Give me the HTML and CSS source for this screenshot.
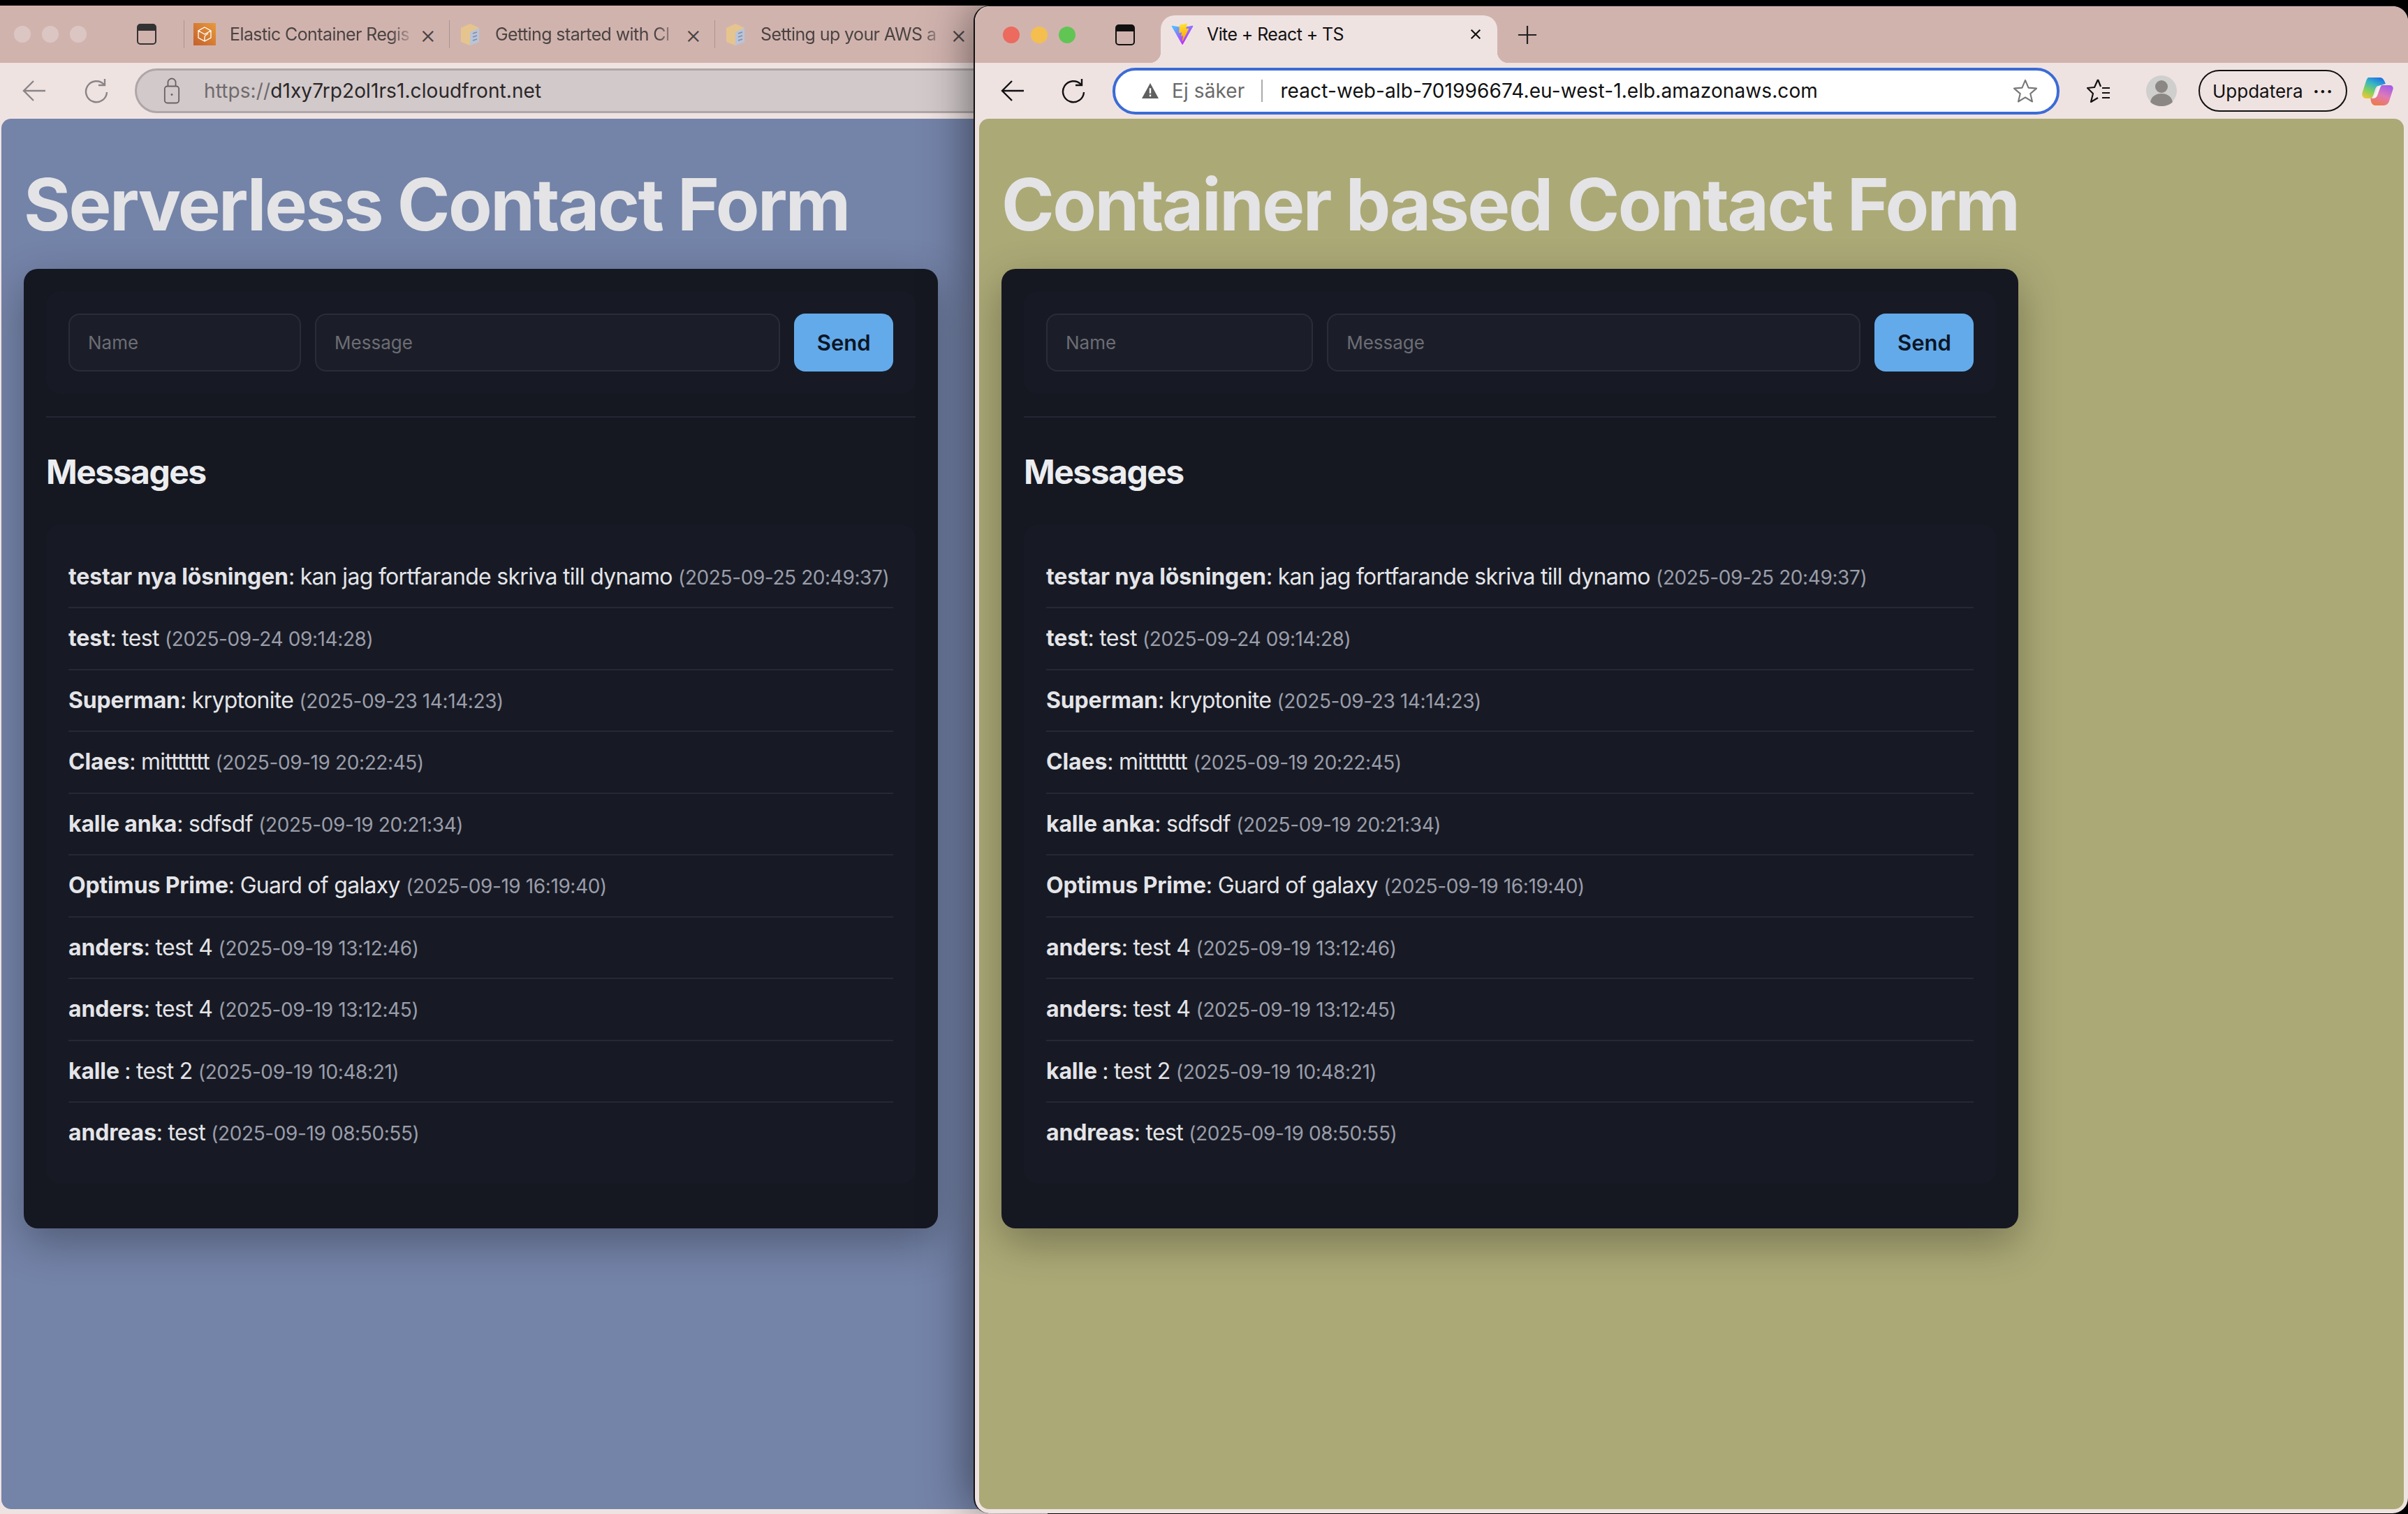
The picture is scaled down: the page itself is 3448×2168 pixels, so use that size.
FILE: index.html
```html
<!DOCTYPE html>
<html lang="sv">
<head>
  <meta charset="UTF-8" />
  <title>Contact forms</title>
  <link rel="stylesheet" href="styles.css">
</head>
<body>
  <div class="desktop">

    <section class="window window-back">
      <div class="tabbar">
        <div class="lights">
          <span class="light"></span><span class="light"></span><span class="light"></span>
        </div>
        <svg class="icon-sidebar" viewBox="0 0 28 30"><rect x="1" y="1" width="26" height="28" rx="4" fill="none" stroke="#333" stroke-width="2"/><path d="M1 5a4 4 0 0 1 4-4h18a4 4 0 0 1 4 4v5H1z" fill="#333"/></svg>
        <div class="bg-tabs">
          <div class="bg-tab">
            <svg class="favicon" viewBox="0 0 32 32">
              <defs><linearGradient id="ecrBg" x1="0" y1="1" x2="1" y2="0"><stop offset="0" stop-color="#c4602a"/><stop offset="1" stop-color="#e89a3c"/></linearGradient></defs>
              <rect width="32" height="32" fill="url(#ecrBg)"/>
              <path d="M16 6l9 5v10l-9 5-9-5V11zM7 11l9 5 9-5M16 26v-6c0-2 2-3 5-5" fill="none" stroke="#fff" stroke-width="1.3"/>
            </svg>
            <span class="bg-tab-title">Elastic Container Regis</span>
            <span class="bg-tab-close">×</span>
          </div>
          <div class="bg-tab">
            <svg class="favicon" viewBox="0 0 32 32"><path d="M3 7l13-6 13 6v20l-13 5-13-5z" fill="#e6c48d"/><path d="M16 13l13-6v20l-13 5z" fill="#b9c4d8"/><path d="M20 15l6-2M20 20l6-2M20 25l6-2" stroke="#7f8ca6" stroke-width="1.6"/></svg>
            <span class="bg-tab-title">Getting started with Cl</span>
            <span class="bg-tab-close">×</span>
          </div>
          <div class="bg-tab">
            <svg class="favicon" viewBox="0 0 32 32"><path d="M3 7l13-6 13 6v20l-13 5-13-5z" fill="#e6c48d"/><path d="M16 13l13-6v20l-13 5z" fill="#b9c4d8"/><path d="M20 15l6-2M20 20l6-2M20 25l6-2" stroke="#7f8ca6" stroke-width="1.6"/></svg>
            <span class="bg-tab-title">Setting up your AWS a</span>
            <span class="bg-tab-close">×</span>
          </div>
        </div>
      </div>
      <div class="toolbar">
        <svg class="tool tool-back" viewBox="0 0 36 36"><path d="M34 18H3M17 4L3 18l14 14" fill="none" stroke="#8a8486" stroke-width="2.4"/></svg>
        <svg class="tool tool-reload" viewBox="0 0 36 36"><path d="M29 9A15 15 0 1 0 33 20" fill="none" stroke="#8a8486" stroke-width="2.4"/><path d="M30 1v9h-9" fill="none" stroke="#8a8486" stroke-width="2.4"/></svg>
        <div class="urlbar urlbar-back">
          <svg class="lock" viewBox="0 0 26 42"><rect x="2" y="14" width="22" height="26" rx="4" fill="none" stroke="#6a6466" stroke-width="2"/><path d="M7 14V8a6 6 0 0 1 12 0v6" fill="none" stroke="#6a6466" stroke-width="2"/><circle cx="13" cy="27" r="1.6" fill="#6a6466"/></svg>
          <span class="url"><span class="url-scheme">https://</span>d1xy7rp2ol1rs1.cloudfront.net</span>
        </div>
      </div>
      <div class="viewport viewport-blue">
        <div class="app">
          <h1>Serverless Contact Form</h1>
          <div class="card">
            <form class="send-form">
              <input class="field" placeholder="Name">
              <input class="field" placeholder="Message">
              <button type="button" class="send">Send</button>
            </form>
            <hr class="divider">
            <h2>Messages</h2>
            <ul class="messages">
              <li><strong>testar nya lösningen</strong>: kan jag fortfarande skriva till dynamo <small>(2025-09-25 20:49:37)</small></li>
              <li><strong>test</strong>: test <small>(2025-09-24 09:14:28)</small></li>
              <li><strong>Superman</strong>: kryptonite <small>(2025-09-23 14:14:23)</small></li>
              <li><strong>Claes</strong>: mittttttt <small>(2025-09-19 20:22:45)</small></li>
              <li><strong>kalle anka</strong>: sdfsdf <small>(2025-09-19 20:21:34)</small></li>
              <li><strong>Optimus Prime</strong>: Guard of galaxy <small>(2025-09-19 16:19:40)</small></li>
              <li><strong>anders</strong>: test 4 <small>(2025-09-19 13:12:46)</small></li>
              <li><strong>anders</strong>: test 4 <small>(2025-09-19 13:12:45)</small></li>
              <li><strong>kalle </strong>: test 2 <small>(2025-09-19 10:48:21)</small></li>
              <li><strong>andreas</strong>: test <small>(2025-09-19 08:50:55)</small></li>
            </ul>
          </div>
        </div>
      </div>
    </section>

    <section class="window window-front">
      <div class="tabbar">
        <div class="lights">
          <span class="light light-red"></span><span class="light light-yellow"></span><span class="light light-green"></span>
        </div>
        <svg class="icon-sidebar" viewBox="0 0 28 30"><rect x="1" y="1" width="26" height="28" rx="4" fill="none" stroke="#111" stroke-width="2"/><path d="M1 5a4 4 0 0 1 4-4h18a4 4 0 0 1 4 4v5H1z" fill="#111"/></svg>
        <div class="active-tab">
          <svg class="favicon" viewBox="0 0 410 404">
            <defs>
              <linearGradient id="viteBody" gradientUnits="userSpaceOnUse" x1="6" y1="33" x2="235" y2="344"><stop offset="0" stop-color="#41d1ff"/><stop offset="1" stop-color="#bd34fe"/></linearGradient>
              <linearGradient id="viteBolt" gradientUnits="userSpaceOnUse" x1="194" y1="8" x2="236" y2="292"><stop offset="0" stop-color="#ffea83"/><stop offset="0.08" stop-color="#ffdd35"/><stop offset="1" stop-color="#ffa800"/></linearGradient>
            </defs>
            <path d="M399.641 59.5246L215.643 388.545C211.844 395.338 202.084 395.378 198.228 388.618L10.5817 59.5563C6.38087 52.1896 12.6802 43.2665 21.0281 44.7586L205.223 77.6824C206.398 77.8924 207.601 77.8904 208.776 77.6763L389.119 44.8058C397.439 43.2894 403.768 52.1434 399.641 59.5246Z" fill="url(#viteBody)"/>
            <path d="M292.965 1.5744L156.801 28.2552C154.563 28.6937 152.906 30.5903 152.771 32.8664L144.395 174.33C144.198 177.662 147.258 180.248 150.51 179.498L188.42 170.749C191.967 169.931 195.172 173.055 194.443 176.622L183.18 231.775C182.422 235.487 185.907 238.661 189.532 237.56L212.947 230.446C216.577 229.344 220.065 232.527 219.297 236.242L201.398 322.875C200.278 328.294 207.486 331.249 210.492 326.603L212.5 323.5L323.454 102.072C325.312 98.3645 322.108 94.137 318.036 94.9228L279.014 102.454C275.347 103.161 272.227 99.746 273.262 96.1583L298.731 7.86689C299.767 4.27314 296.636 0.855181 292.965 1.5744Z" fill="url(#viteBolt)"/>
          </svg>
          <span class="active-tab-title">Vite + React + TS</span>
          <svg class="tab-close" viewBox="0 0 20 20"><path d="M3 3l14 14M17 3L3 17" stroke="#111" stroke-width="2.4"/></svg>
        </div>
        <svg class="new-tab" viewBox="0 0 30 30"><path d="M15 1v28M1 15h28" stroke="#222" stroke-width="2.4"/></svg>
      </div>
      <div class="toolbar">
        <svg class="tool tool-back-front" viewBox="0 0 36 36"><path d="M34 18H3M17 4L3 18l14 14" fill="none" stroke="#111" stroke-width="2.4"/></svg>
        <svg class="tool tool-reload-front" viewBox="0 0 36 36"><path d="M29 9A15 15 0 1 0 33 20" fill="none" stroke="#111" stroke-width="2.4"/><path d="M30 1v9h-9" fill="none" stroke="#111" stroke-width="2.4"/></svg>
        <div class="urlbar urlbar-front">
          <svg class="warn" viewBox="0 0 26 24"><path d="M13 0l13 24H0z" fill="#5f5f5f"/><path d="M13 8v8M13 18v3" stroke="#fff" stroke-width="2.6"/></svg>
          <span class="not-secure">Ej säker</span>
          <span class="url-sep"></span>
          <span class="url">react-web-alb-701996674.eu-west-1.elb.amazonaws.com</span>
          <svg class="star" viewBox="0 0 36 36"><path d="M18 2l4.8 11.4 12.2 1-9.3 8 2.9 12L18 28l-10.6 6.4 2.9-12-9.3-8 12.2-1z" fill="none" stroke="#777" stroke-width="2.2" stroke-linejoin="round"/></svg>
        </div>
        <svg class="tool tool-favs" viewBox="0 0 36 38"><path d="M17 3l-5 11-10 1 8 8-3 12 10-6" fill="none" stroke="#111" stroke-width="2.2" stroke-linejoin="round"/><path d="M17 3l4 10M23 15h11M23 22h11M23 29h11" fill="none" stroke="#111" stroke-width="2.2"/></svg>
        <svg class="avatar" viewBox="0 0 44 44"><circle cx="22" cy="22" r="22" fill="#cfcfcd"/><circle cx="22" cy="16" r="9" fill="#8b8785"/><path d="M6 38c2-9 9-12 16-12s14 3 16 12c-4 4-10 6-16 6S10 42 6 38z" fill="#8b8785"/></svg>
        <div class="update-pill">
          <span>Uppdatera</span>
          <span class="pill-dots">···</span>
        </div>
        <svg class="copilot" viewBox="0 0 45 41">
          <defs>
            <linearGradient id="copilotLeft" x1="0.75" y1="0" x2="0.25" y2="1"><stop offset="0" stop-color="#1f6fe6"/><stop offset="0.35" stop-color="#35b6c4"/><stop offset="0.7" stop-color="#86cf5c"/><stop offset="1" stop-color="#e9c63a"/></linearGradient>
            <linearGradient id="copilotRight" x1="0.7" y1="0" x2="0.3" y2="1"><stop offset="0" stop-color="#a45ee6"/><stop offset="0.5" stop-color="#e07ab6"/><stop offset="1" stop-color="#ee7a4a"/></linearGradient>
          </defs>
          <path d="M10 1H26C30 1 32 5 34 10L24 13C21 13 20 15 19 18L16 27C15 30 13 31 10 31H6C2 31-.5 27 .5 23L6 6C7 3 8 1 10 1z" fill="url(#copilotLeft)"/>
          <path d="M24 13L34 11 28 30 16 30z" fill="#f7f2f0"/>
          <path d="M29 12H39C43 12 45.5 14 44.5 18L39 35C38 38 35 41 31 41H19C15 41 12 36 12.5 30 16 32 20 31 22 27L26 16C27 13 28 12 29 12z" fill="url(#copilotRight)"/>
        </svg>
      </div>
      <div class="viewport viewport-olive">
        <div class="app">
          <h1>Container based Contact Form</h1>
          <div class="card">
            <form class="send-form">
              <input class="field" placeholder="Name">
              <input class="field" placeholder="Message">
              <button type="button" class="send">Send</button>
            </form>
            <hr class="divider">
            <h2>Messages</h2>
            <ul class="messages">
              <li><strong>testar nya lösningen</strong>: kan jag fortfarande skriva till dynamo <small>(2025-09-25 20:49:37)</small></li>
              <li><strong>test</strong>: test <small>(2025-09-24 09:14:28)</small></li>
              <li><strong>Superman</strong>: kryptonite <small>(2025-09-23 14:14:23)</small></li>
              <li><strong>Claes</strong>: mittttttt <small>(2025-09-19 20:22:45)</small></li>
              <li><strong>kalle anka</strong>: sdfsdf <small>(2025-09-19 20:21:34)</small></li>
              <li><strong>Optimus Prime</strong>: Guard of galaxy <small>(2025-09-19 16:19:40)</small></li>
              <li><strong>anders</strong>: test 4 <small>(2025-09-19 13:12:46)</small></li>
              <li><strong>anders</strong>: test 4 <small>(2025-09-19 13:12:45)</small></li>
              <li><strong>kalle </strong>: test 2 <small>(2025-09-19 10:48:21)</small></li>
              <li><strong>andreas</strong>: test <small>(2025-09-19 08:50:55)</small></li>
            </ul>
          </div>
        </div>
      </div>
    </section>

  </div>
</body>
</html>
```
FILE: styles.css
```css
html, body {
  margin: 0;
  height: 100%;
  background: #000;
  overflow: hidden;
  font-family: Inter, "Noto Sans", sans-serif;
}

.desktop {
  position: relative;
  width: 3448px;
  height: 2168px;
  overflow: hidden;
}

/* windows sit on a free canvas, the front one overlaps the back one */
.window {
  position: absolute;
  top: 8px;
  height: 2160px;
  display: flex;
  flex-direction: column;
  box-sizing: border-box;
  background: #efe3e2;
  overflow: hidden;
}

.window-back {
  left: 0;
  width: 1500px;
  padding: 0 0 7px 2px;
}

.window-front {
  left: 1394px;
  width: 2054px;
  height: 2159px;
  padding: 0 6px 6px 6px;
  border-left: 2px solid #111;
  border-top: 1px solid #222;
  border-radius: 22px;
  box-shadow: 0 0 70px rgba(0, 0, 0, 0.55);
  overflow: visible;
}

/* tab strip */
.tabbar {
  height: 82px;
  flex: none;
  display: flex;
  align-items: center;
  background: #d1b3ae;
  font-size: 25px;
  letter-spacing: -0.6px;
}

.window-back .tabbar {
  margin: 0 0 0 -2px;
  padding-left: 20px;
}

.window-front .tabbar {
  height: 81px;
  margin: 0 -6px;
  border-radius: 22px 22px 0 0;
  padding-left: 40px;
}

.lights {
  display: flex;
  gap: 16px;
}

.light {
  width: 24px;
  height: 24px;
  border-radius: 50%;
  background: #dcc6c3;
}

.light-red { background: #ec6a5e; }
.light-yellow { background: #f4bf4f; }
.light-green { background: #61c554; }

.icon-sidebar {
  width: 28px;
  height: 30px;
  margin-left: 72px;
  flex: none;
}

.window-front .icon-sidebar {
  margin-left: 57px;
}

.bg-tabs {
  display: flex;
  margin-left: 39px;
}

.bg-tab {
  width: 380px;
  height: 40px;
  box-sizing: border-box;
  display: flex;
  align-items: center;
  padding-left: 13px;
  border-left: 1px solid #a8928e;
  color: #4a4443;
}

.favicon {
  width: 32px;
  height: 32px;
  flex: none;
}

.bg-tab-title {
  width: 262px;
  margin-left: 20px;
  white-space: nowrap;
  -webkit-mask-image: linear-gradient(to right, #000 88%, rgba(0, 0, 0, 0.1));
  mask-image: linear-gradient(to right, #000 88%, rgba(0, 0, 0, 0.1));
}

.bg-tab-close {
  margin-left: 10px;
  font-size: 36px;
  font-weight: 300;
}

.active-tab {
  position: relative;
  width: 482px;
  height: 68px;
  margin-top: 13px;
  margin-left: 37px;
  box-sizing: border-box;
  padding: 0 22px 14px 15px;
  display: flex;
  align-items: center;
  flex: none;
  background: #efe3e2;
  border-radius: 20px 20px 0 0;
  color: #111;
}

.active-tab::before,
.active-tab::after {
  content: "";
  position: absolute;
  bottom: 0;
  width: 16px;
  height: 16px;
}

.active-tab::before {
  left: -16px;
  background: radial-gradient(circle at 0 0, transparent 16px, #efe3e2 16.5px);
}

.active-tab::after {
  right: -16px;
  background: radial-gradient(circle at 100% 0, transparent 16px, #efe3e2 16.5px);
}

.active-tab-title {
  margin-left: 19px;
  flex: 1;
}

.tab-close {
  width: 18px;
  height: 18px;
}

.new-tab {
  width: 28px;
  height: 28px;
  margin-left: 29px;
}

/* address row */
.toolbar {
  height: 80px;
  flex: none;
  display: flex;
  align-items: center;
}

.window-back .toolbar {
  margin-left: -2px;
}

.window-front .toolbar {
  margin-left: -6px;
}

.tool {
  width: 36px;
  height: 36px;
  flex: none;
}

.tool-back { margin-left: 31px; }
.tool-reload { margin-left: 53px; }
.tool-back-front { margin-left: 36px; }
.tool-reload-front { margin-left: 51px; }

.urlbar {
  display: flex;
  align-items: center;
  box-sizing: border-box;
  flex: none;
  font-size: 28px;
  letter-spacing: 0.1px;
  color: #111;
}

.urlbar-back {
  width: 1400px;
  height: 64px;
  margin-left: 37px;
  padding-left: 38px;
  background: #d2c9ca;
  border: 3px solid #aea6a8;
  border-radius: 32px;
}

.urlbar-front {
  width: 1356px;
  height: 67px;
  margin-left: 38px;
  padding-left: 38px;
  background: #fff;
  border: 4px solid #3b6bd6;
  border-radius: 33px;
}

.lock {
  width: 24px;
  height: 40px;
  flex: none;
}

.urlbar-back .url {
  margin-left: 34px;
  color: #2a2728;
}

.url-scheme {
  color: #6f6a6c;
}

.warn {
  width: 24px;
  height: 24px;
  flex: none;
}

.not-secure {
  margin-left: 19px;
  color: #6a6a6a;
}

.url-sep {
  width: 2px;
  height: 32px;
  margin: 0 25px 0 24px;
  background: #aaa;
}

.star {
  width: 34px;
  height: 34px;
  margin-left: auto;
  margin-right: 28px;
}

.tool-favs {
  margin-left: 38px;
  height: 38px;
}

.avatar {
  width: 44px;
  height: 44px;
  margin-left: 50px;
  flex: none;
}

.update-pill {
  width: 213px;
  height: 60px;
  margin-left: 31px;
  box-sizing: border-box;
  padding: 0 18px;
  display: flex;
  align-items: center;
  justify-content: space-between;
  border: 2px solid #111;
  border-radius: 30px;
  font-size: 26px;
  color: #111;
  flex: none;
}

.pill-dots {
  font-weight: 700;
  letter-spacing: 1px;
}

.copilot {
  width: 45px;
  height: 41px;
  margin-left: 21px;
  flex: none;
}

/* page inside the browser */
.viewport {
  flex: 1;
  box-sizing: border-box;
  padding: 67px 32px 0;
  border-radius: 14px;
  overflow: hidden;
}

.viewport-blue { background: #7483a8; }
.viewport-olive { background: #aba976; }

.app {
  width: fit-content;
}

h1 {
  margin: 0 0 35px;
  font-size: 102.4px;
  line-height: 1.1;
  font-weight: 700;
  letter-spacing: -2.55px;
  color: #e4e4e6;
  white-space: nowrap;
}

.card {
  box-sizing: border-box;
  padding: 32px;
  background: #151821;
  border-radius: 20px;
  box-shadow: 0 20px 60px rgba(0, 0, 0, 0.3);
}

/* inputs must not widen the card, only the title and the rows do that */
.send-form {
  display: grid;
  grid-template-columns: 1fr 2fr 142px;
  gap: 20px;
  padding: 32px;
  background: #171a24;
  border-radius: 20px;
  contain: inline-size;
}

.field {
  width: 100%;
  min-width: 0;
  height: 83px;
  box-sizing: border-box;
  padding: 0 26px;
  background: #1b1e29;
  border: 2px solid #2a2d38;
  border-radius: 16px;
  font: 26px Inter, sans-serif;
  color: #e4e4e6;
}

.field::placeholder {
  color: #6c6d74;
}

.send {
  height: 83px;
  border: 0;
  border-radius: 16px;
  background: #63aaea;
  color: #0b1524;
  font: 600 31px Inter, sans-serif;
}

.divider {
  margin: 32px 0 0;
  height: 2px;
  border: 0;
  background: #252833;
}

h2 {
  margin: 48px 0 45px;
  font-size: 48px;
  line-height: 60px;
  font-weight: 650;
  letter-spacing: -1.5px;
  color: #ecedf0;
}

.messages {
  list-style: none;
  margin: 0 0 32px;
  padding: 32px;
  background: #171a24;
  border-radius: 20px;
}

.messages li {
  padding: 20px 6px 20px 0;
  line-height: 46.5px;
  font-size: 32px;
  letter-spacing: -0.7px;
  color: #e4e4e8;
  white-space: nowrap;
  border-bottom: 2px solid #262932;
}

.messages li:last-child {
  padding-bottom: 17px;
  border-bottom: 0;
}

.messages strong {
  letter-spacing: -0.15px;
}

.messages small {
  font-size: 28px;
  line-height: 1;
  letter-spacing: -0.4px;
  color: #9a9daa;
}
```
